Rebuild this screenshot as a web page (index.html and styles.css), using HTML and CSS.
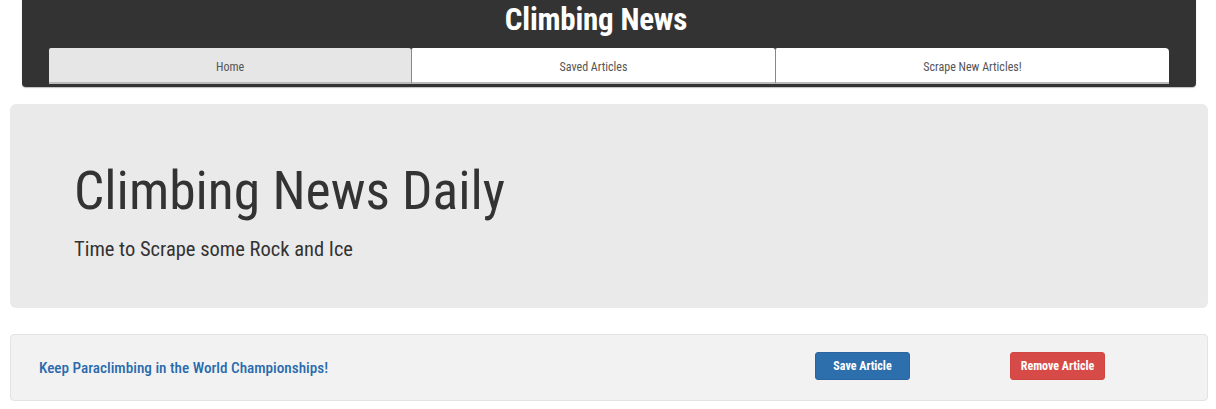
FILE: index.html
```html
<!DOCTYPE html>
<html lang="en">
<head>
<meta charset="utf-8">
<title>Climbing News</title>
<link rel="stylesheet" href="styles.css">
</head>
<body>
<header class="site-header">
  <h1 class="brand">Climbing News</h1>
  <nav class="tabs">
    <a class="tab tab-active" href="#">Home</a>
    <a class="tab" href="#">Saved Articles</a>
    <a class="tab tab-last" href="#">Scrape New Articles!</a>
  </nav>
</header>
<section class="jumbotron">
  <h2 class="jumbo-title">Climbing News Daily</h2>
  <p class="jumbo-sub">Time to Scrape some Rock and Ice</p>
</section>
<article class="card">
  <a class="card-title" href="#">Keep Paraclimbing in the World Championships!</a>
  <button class="btn btn-save">Save Article</button>
  <button class="btn btn-remove">Remove Article</button>
</article>
</body>
</html>
```
FILE: styles.css
```css
* { box-sizing: border-box; }
body {
  margin: 0;
  background: #fff;
  font-family: "Roboto Condensed", Roboto, "Liberation Sans Narrow", sans-serif;
  font-stretch: 75%;
  color: #333;
}
.site-header {
  margin: 0 20px 0 22px;
  background: #333;
  border-radius: 0 0 4px 4px;
  padding: 0 27px 3px;
  box-shadow: 0 1px 1px rgba(0,0,0,0.25);
}
.brand {
  margin: 0;
  height: 48px;
  line-height: 40px;
  padding-right: 26px;
  text-align: center;
  color: #fff;
  font-size: 31px;
  font-weight: 700;
  letter-spacing: -0.2px;
}
.tabs {
  display: grid;
  grid-template-columns: 362px 364px 1fr;
  height: 36px;
}
.tab {
  display: flex;
  align-items: center;
  justify-content: center;
  padding-top: 3px;
  background: #fff;
  color: #555;
  font-size: 12px;
  text-decoration: none;
  border-left: 1px solid #888;
  border-bottom: 2px solid #bbb;
  border-radius: 2px 2px 0 0;
}
.tab-active { background: #e6e6e6; border-left: 0; }
.tab-last { border-radius: 2px 4px 0 0; }
.jumbotron {
  margin: 17px 8px 0 10px;
  height: 204px;
  background: #eaeaea;
  border-radius: 6px;
  padding: 55px 64px 0;
}
.jumbo-title {
  margin: 0;
  font-size: 53.5px;
  font-weight: 400;
  line-height: 64px;
  color: #333;
}
.jumbo-sub {
  margin: 13px 0 0;
  font-size: 20.5px;
  line-height: 26px;
  color: #333;
}
.card {
  margin: 26px 8px 0 10px;
  height: 67px;
  background: #f2f2f2;
  border: 1px solid #e3e3e3;
  border-radius: 4px;
  display: flex;
  align-items: center;
  padding: 0 102px 0 28px;
}
.card-title {
  flex: 1;
  color: #2a6aad;
  font-size: 15.2px;
  font-weight: 500;
  text-decoration: none;
  padding-top: 1px;
}
.btn {
  width: 95px;
  height: 28px;
  border: 0;
  border-radius: 3px;
  color: #fff;
  font-family: inherit;
  font-stretch: 75%;
  font-size: 12px;
  font-weight: 700;
  margin-top: -4px;
  cursor: pointer;
}
.btn-save { background: #2d6ead; border: 1px solid #2a65a0; }
.btn-remove { background: #d64b47; border: 1px solid #cf4642; margin-left: 100px; }
```
